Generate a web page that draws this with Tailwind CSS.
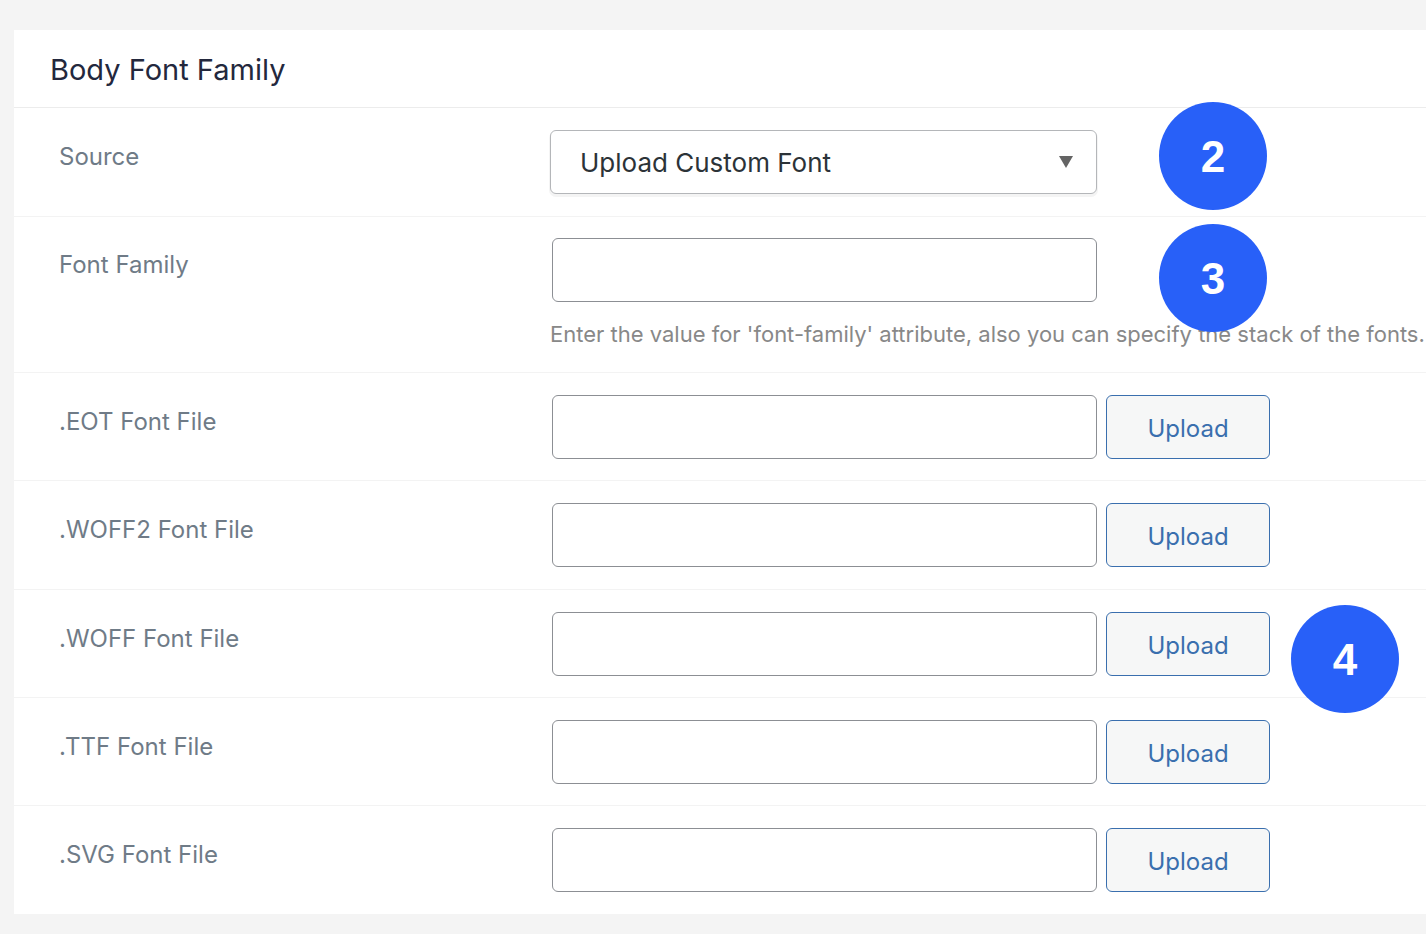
<!doctype html>
<html lang="en">
  <head>
    <meta charset="UTF-8" />
    <meta name="viewport" content="width=device-width, initial-scale=1.0" />
    <title>Body Font Family</title>
    <script src="https://cdn.jsdelivr.net/npm/@tailwindcss/browser@4"></script>
  </head>

  <body class="min-h-screen bg-[#f4f4f4] pt-[30px] pl-[14px] font-['Inter',sans-serif]">
    <main class="bg-white">
      <!-- Section title -->
      <header class="border-b border-[#ececec] pt-5 pb-[17px] pl-9">
        <h1 class="text-[29px] leading-10 text-[#23283d]">Body Font Family</h1>
      </header>

      <form>
        <!-- Source -->
        <div class="flex border-b border-[#f3f3f3] pt-[22px] pb-[22px] pl-[45px]">
          <label for="source" class="w-[491px] shrink-0 pt-[11px] text-2xl text-[#6f7b87]">Source</label>
          <div class="relative">
            <select
              id="source"
              class="h-16 w-[547px] appearance-none rounded-md border border-[#b4b6b9] bg-white pr-16 pl-[29px] text-[26px] text-[#2c3338] shadow-[0_2px_0_1px_#f4f4f4]"
            >
              <option>Upload Custom Font</option>
            </select>
            <svg class="pointer-events-none absolute top-[26px] right-6 h-3 w-[14px]" viewBox="0 0 14 12" fill="#646464">
              <path d="M0 0h14L7 12z" />
            </svg>
            <span
              class="absolute -top-[28px] left-[609px] z-10 flex size-[108px] items-center justify-center rounded-full bg-[#2860f8] pt-[2px] font-['Liberation_Sans',sans-serif] text-[44px] font-bold text-white"
              >2</span
            >
          </div>
        </div>

        <!-- Font family -->
        <div class="flex border-b border-[#f3f3f3] pt-[21px] pb-[21px] pl-[45px]">
          <label for="font-family" class="w-[491px] shrink-0 pt-[11px] text-2xl text-[#6f7b87]">Font Family</label>
          <div class="relative">
            <input
              type="text"
              id="font-family"
              aria-describedby="font-family-help"
              class="ml-[2px] block h-16 w-[545px] rounded-md border border-[#8c8f94] px-4 text-2xl text-[#2c3338]"
            />
            <p id="font-family-help" class="mt-4 text-[22px] leading-[33px] whitespace-nowrap text-[#888888]">
              Enter the value for 'font-family' attribute, also you can specify the stack of the fonts.
            </p>
            <span
              class="absolute -top-[14px] left-[609px] z-10 flex size-[108px] items-center justify-center rounded-full bg-[#2860f8] pt-[2px] font-['Liberation_Sans',sans-serif] text-[44px] font-bold text-white"
              >3</span
            >
          </div>
        </div>

        <!-- Font files -->
        <div class="flex border-b border-[#f3f3f3] pt-[22px] pb-[21px] pl-[45px]">
          <label for="font-eot" class="w-[493px] shrink-0 pt-[11px] text-2xl text-[#6f7b87]">.EOT Font File</label>
          <div class="flex gap-[9px]">
            <input
              type="text"
              id="font-eot"
              class="h-16 w-[545px] rounded-md border border-[#8c8f94] px-4 text-2xl text-[#2c3338]"
            />
            <button
              type="button"
              class="h-16 w-[164px] rounded-md border border-[#3a6fae] bg-[#f6f7f7] pt-[3px] text-2xl text-[#3a6fae]"
            >
              Upload
            </button>
          </div>
        </div>

        <div class="flex border-b border-[#f3f3f3] pt-[22px] pb-[22px] pl-[45px]">
          <label for="font-woff2" class="w-[493px] shrink-0 pt-[11px] text-2xl text-[#6f7b87]">.WOFF2 Font File</label>
          <div class="flex gap-[9px]">
            <input
              type="text"
              id="font-woff2"
              class="h-16 w-[545px] rounded-md border border-[#8c8f94] px-4 text-2xl text-[#2c3338]"
            />
            <button
              type="button"
              class="h-16 w-[164px] rounded-md border border-[#3a6fae] bg-[#f6f7f7] pt-[3px] text-2xl text-[#3a6fae]"
            >
              Upload
            </button>
          </div>
        </div>

        <div class="flex border-b border-[#f3f3f3] pt-[22px] pb-[21px] pl-[45px]">
          <label for="font-woff" class="w-[493px] shrink-0 pt-[11px] text-2xl text-[#6f7b87]">.WOFF Font File</label>
          <div class="relative flex gap-[9px]">
            <input
              type="text"
              id="font-woff"
              class="h-16 w-[545px] rounded-md border border-[#8c8f94] px-4 text-2xl text-[#2c3338]"
            />
            <button
              type="button"
              class="h-16 w-[164px] rounded-md border border-[#3a6fae] bg-[#f6f7f7] pt-[3px] text-2xl text-[#3a6fae]"
            >
              Upload
            </button>
            <span
              class="absolute -top-[7px] left-[739px] z-10 flex size-[108px] items-center justify-center rounded-full bg-[#2860f8] pt-[2px] font-['Liberation_Sans',sans-serif] text-[44px] font-bold text-white"
              >4</span
            >
          </div>
        </div>

        <div class="flex border-b border-[#f3f3f3] pt-[22px] pb-[21px] pl-[45px]">
          <label for="font-ttf" class="w-[493px] shrink-0 pt-[11px] text-2xl text-[#6f7b87]">.TTF Font File</label>
          <div class="flex gap-[9px]">
            <input
              type="text"
              id="font-ttf"
              class="h-16 w-[545px] rounded-md border border-[#8c8f94] px-4 text-2xl text-[#2c3338]"
            />
            <button
              type="button"
              class="h-16 w-[164px] rounded-md border border-[#3a6fae] bg-[#f6f7f7] pt-[3px] text-2xl text-[#3a6fae]"
            >
              Upload
            </button>
          </div>
        </div>

        <div class="flex pt-[22px] pb-[22px] pl-[45px]">
          <label for="font-svg" class="w-[493px] shrink-0 pt-[11px] text-2xl text-[#6f7b87]">.SVG Font File</label>
          <div class="flex gap-[9px]">
            <input
              type="text"
              id="font-svg"
              class="h-16 w-[545px] rounded-md border border-[#8c8f94] px-4 text-2xl text-[#2c3338]"
            />
            <button
              type="button"
              class="h-16 w-[164px] rounded-md border border-[#3a6fae] bg-[#f6f7f7] pt-[3px] text-2xl text-[#3a6fae]"
            >
              Upload
            </button>
          </div>
        </div>
      </form>
    </main>
  </body>
</html>
